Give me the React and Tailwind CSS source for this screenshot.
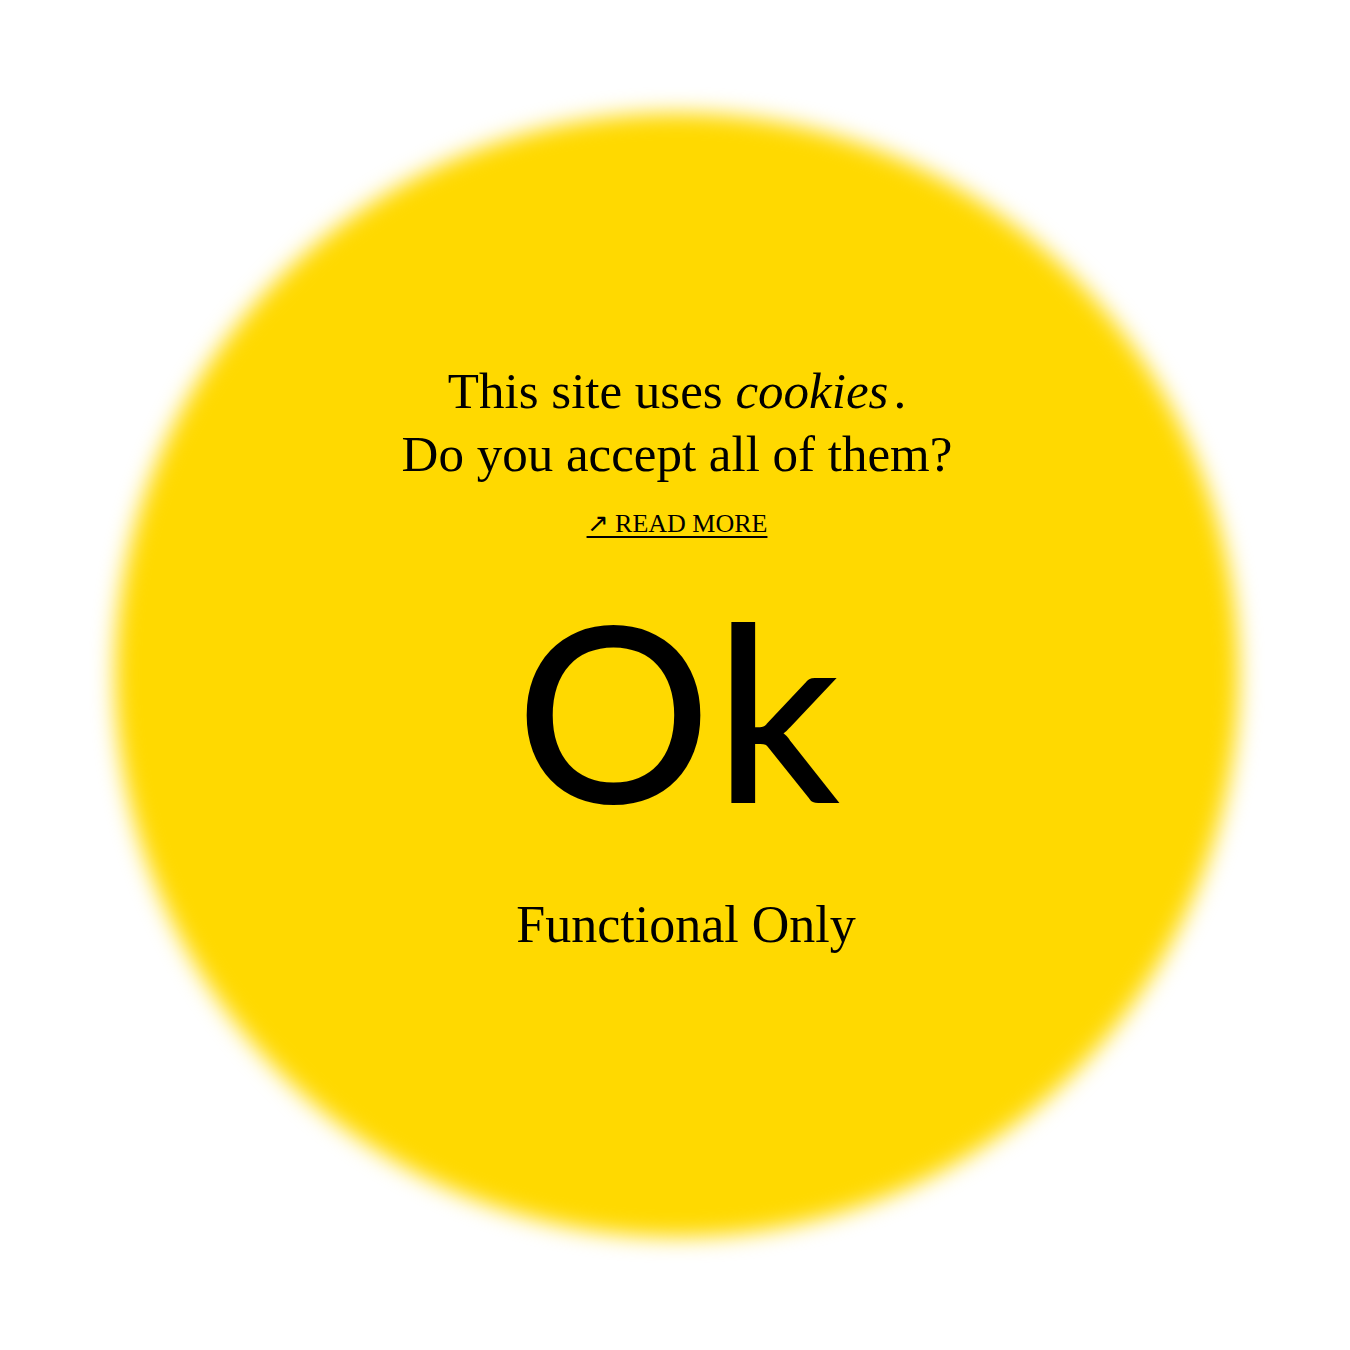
import React from "react";

function App() {
  return (
    <div className="w-full h-[1350px] bg-white flex items-center justify-center pl-[4px] overflow-hidden">
      <div className="relative w-[1124px] h-[1124px]">
        <div className="absolute inset-0 rounded-full bg-[#FFD900] blur-[11px]"></div>
        <div className="relative flex flex-col items-center pt-[247px] text-black">
          <p className="font-['Liberation_Serif',serif] text-[51px] leading-[63px] text-center">
            This site uses <em className="italic">cookies</em>
            <span className="ml-[5px]">.</span>
            <br />
            Do you accept all of them?
          </p>
          <a
            href="#"
            className="mt-[23px] font-['Liberation_Serif',serif] text-[26px] leading-[30px] uppercase underline decoration-[2px] underline-offset-[4px]"
          >
            ↗ Read More
          </a>
          <button className="mt-[43px] pl-[8px] font-['Lato',sans-serif] text-[243px] leading-[253px] font-normal tracking-[7px] [-webkit-text-stroke:2px_black]">
            Ok
          </button>
          <button className="mt-[58px] pl-[18px] font-['Liberation_Serif',serif] text-[52px] leading-[64px]">
            Functional Only
          </button>
        </div>
      </div>
    </div>
  );
}

export default App;
